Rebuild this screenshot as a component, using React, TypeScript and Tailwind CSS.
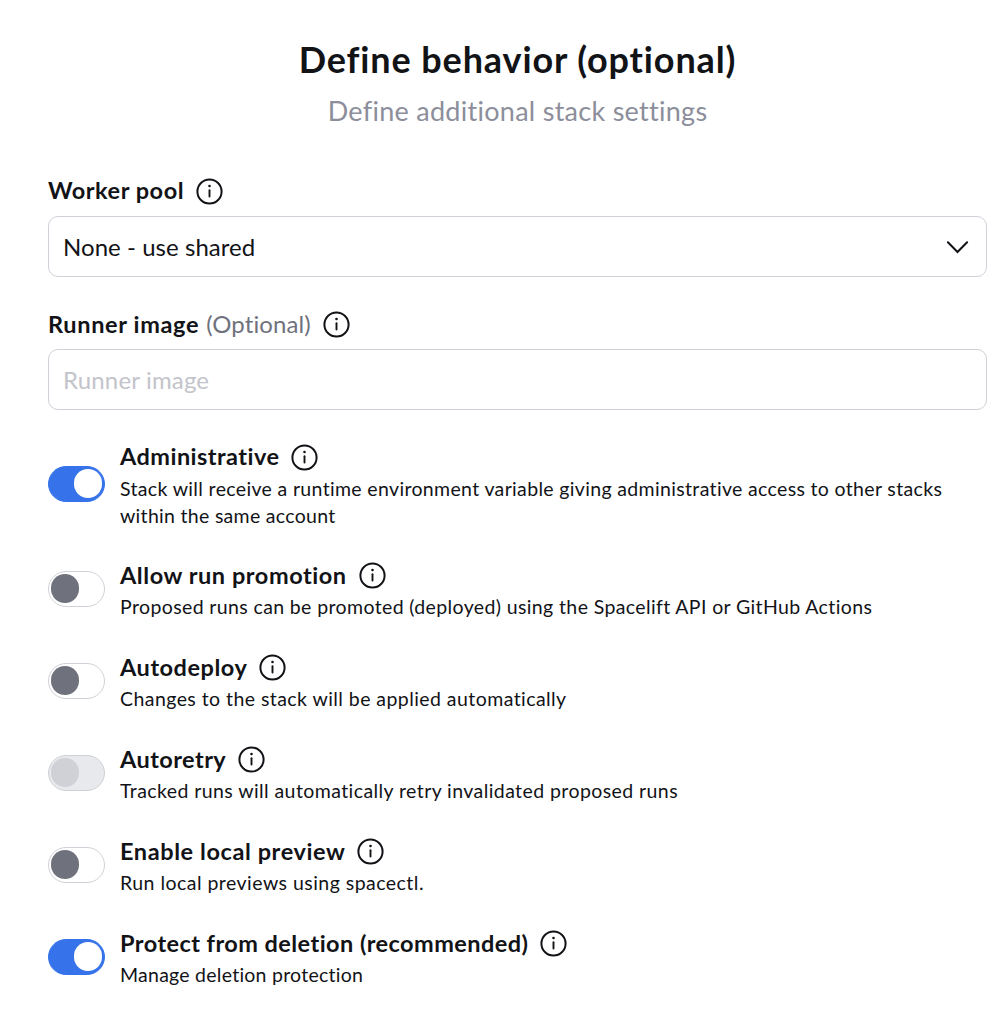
function InfoIcon() {
  return (
    <svg className="size-[27px] shrink-0 text-[#121317]" viewBox="0 0 27 27" fill="none" stroke="currentColor">
      <circle cx="13.5" cy="13.5" r="12.1" strokeWidth="2" />
      <path d="M13.5 12.2v6.4" strokeWidth="1.9" strokeLinecap="round" />
      <circle cx="13.5" cy="8" r="1.3" fill="currentColor" stroke="none" />
    </svg>
  );
}

type ToggleState = 'on' | 'off' | 'disabled';

const track: Record<ToggleState, string> = {
  on: 'justify-end border-[#3673ea] bg-[#3673ea] pr-[2px]',
  off: 'justify-start border-[#d0d1d8] bg-white pl-[2px]',
  disabled: 'justify-start border-[#d0d1d6] bg-[#e8e9ed] pl-[2px]',
};

const knob: Record<ToggleState, string> = {
  on: 'bg-white',
  off: 'bg-[#6f727c]',
  disabled: 'bg-[#d0d1d6]',
};

function Toggle({ state }: { state: ToggleState }) {
  return (
    <button
      type="button"
      role="switch"
      aria-checked={state === 'on'}
      disabled={state === 'disabled'}
      className={`flex h-9 w-[57px] shrink-0 items-center rounded-full border ${track[state]}`}
    >
      <span className={`mb-px h-[29px] w-7 rounded-full ${knob[state]}`} />
    </button>
  );
}

interface Setting {
  title: string;
  titleClass: string;
  lines: { text: string; className: string }[];
  state: ToggleState;
}

const settings: Setting[] = [
  {
    title: 'Administrative',
    titleClass: 'tracking-[0.46px]',
    lines: [
      {
        text: 'Stack will receive a runtime environment variable giving administrative access to other stacks',
        className: 'tracking-[0.343px]',
      },
      { text: 'within the same account', className: 'tracking-[0.3px]' },
    ],
    state: 'on',
  },
  {
    title: 'Allow run promotion',
    titleClass: 'tracking-[0.56px]',
    lines: [
      {
        text: 'Proposed runs can be promoted (deployed) using the Spacelift API or GitHub Actions',
        className: 'tracking-[0.375px]',
      },
    ],
    state: 'off',
  },
  {
    title: 'Autodeploy',
    titleClass: 'tracking-[0.54px]',
    lines: [{ text: 'Changes to the stack will be applied automatically', className: 'tracking-[0.436px]' }],
    state: 'off',
  },
  {
    title: 'Autoretry',
    titleClass: 'tracking-[0.44px]',
    lines: [
      { text: 'Tracked runs will automatically retry invalidated proposed runs', className: 'tracking-[0.42px]' },
    ],
    state: 'disabled',
  },
  {
    title: 'Enable local preview',
    titleClass: 'tracking-[0.59px]',
    lines: [{ text: 'Run local previews using spacectl.', className: 'tracking-[0.465px]' }],
    state: 'off',
  },
  {
    title: 'Protect from deletion (recommended)',
    titleClass: 'tracking-[0.445px]',
    lines: [{ text: 'Manage deletion protection', className: 'tracking-[0.25px]' }],
    state: 'on',
  },
];

export default function App() {
  return (
    <main className="h-[1020px] w-[1008px] overflow-hidden bg-white pt-[35px] pr-[21px] pl-12 font-['Lato',sans-serif] text-[#121317]">
      <header className="text-center whitespace-nowrap">
        <h1 className="text-[36px] leading-12 font-bold tracking-[0.88px]">Define behavior (optional)</h1>
        <p className="mt-[10px] text-[27px] leading-9 tracking-[0.278px] text-[#8c8e9b]">
          Define additional stack settings
        </p>
      </header>

      <section className="mt-[46px]">
        <div className="flex h-8 items-center gap-3">
          <span className="text-[23.5px] font-bold tracking-[0.53px]">Worker pool</span>
          <InfoIcon />
        </div>
        <div className="mt-[9px] flex h-[61px] items-center justify-between rounded-[10px] border border-[#d0d1d8] pr-[17px] pl-[14px]">
          <span className="text-[24px] tracking-[0.05px]">None - use shared</span>
          <svg className="h-6 w-6" viewBox="0 0 24 24" fill="none" stroke="currentColor" strokeWidth="2" strokeLinecap="round">
            <path d="M2.9 7.2 12.5 17l9.6-9.8" />
          </svg>
        </div>
      </section>

      <section className="mt-[31px]">
        <div className="flex h-8 items-center gap-3">
          <span className="flex items-baseline gap-[7px]">
            <span className="text-[23.5px] font-bold tracking-[0.66px]">Runner image</span>
            <span className="text-[24px] tracking-[0.103px] text-[#6f727c]">(Optional)</span>
          </span>
          <InfoIcon />
        </div>
        <div className="mt-[9px] flex h-[61px] items-center rounded-[10px] border border-[#d0d1d8] px-[14px]">
          <input
            className="w-full text-[24px] tracking-[0.17px] outline-none placeholder:text-[#c3c4cb]"
            placeholder="Runner image"
          />
        </div>
      </section>

      <div className="mt-[31px] flex flex-col gap-[32.9px]">
        {settings.map((s) => (
          <div key={s.title} className="flex items-center gap-[15px]">
            <Toggle state={s.state} />
            <div>
              <div className="flex h-8 items-center gap-3">
                <span className={`text-[23.5px] font-bold ${s.titleClass}`}>{s.title}</span>
                <InfoIcon />
              </div>
              <div className="-mb-[1.5px] pt-[1.5px]">
                {s.lines.map((l) => (
                  <p key={l.text} className={`text-[19.5px] leading-[27px] whitespace-nowrap ${l.className}`}>
                    {l.text}
                  </p>
                ))}
              </div>
            </div>
          </div>
        ))}
      </div>
    </main>
  );
}
